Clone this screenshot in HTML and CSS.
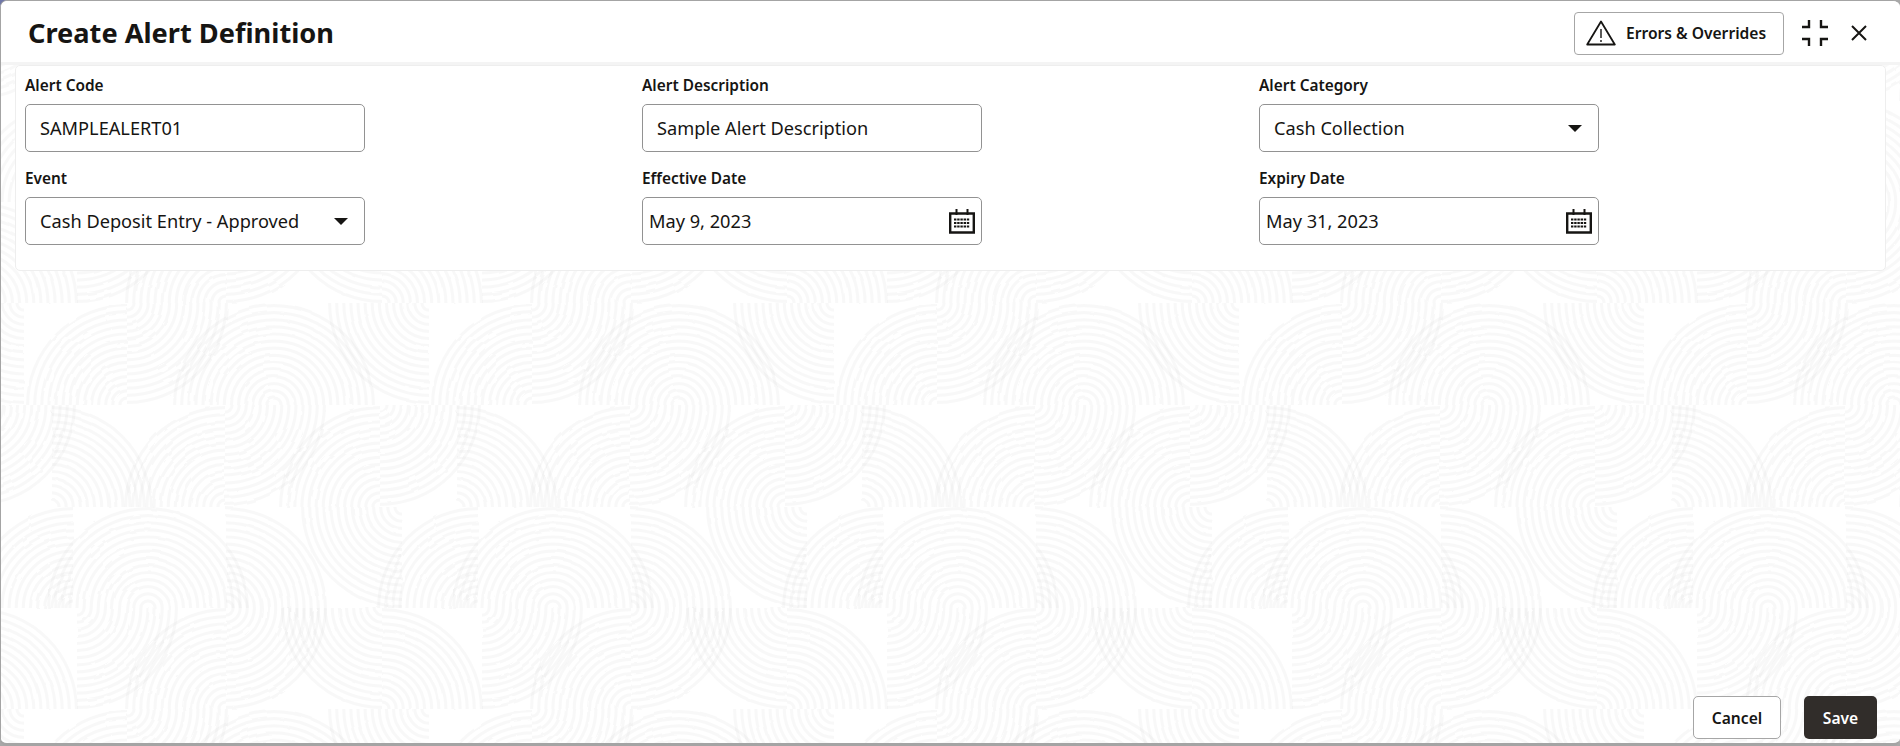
FILE: index.html
```html
<!DOCTYPE html>
<html lang="en">
<head>
<meta charset="utf-8">
<title>Create Alert Definition</title>
<link rel="stylesheet" href="styles.css">
</head>
<body>
<div class="dialog">
  <svg class="pattern" width="1900" height="746" aria-hidden="true">
    <defs>
      <filter id="wobble" x="0" y="0" width="100%" height="100%">
        <feTurbulence type="fractalNoise" baseFrequency="0.05" numOctaves="2" seed="4"/>
        <feDisplacementMap in="SourceGraphic" scale="3"/>
      </filter>
      <path id="q" class="rings" d="M-7.1 0A7.1 7.1 0 0 1 0-7.1M-14.200 0A14.200 14.200 0 0 1 0-14.200M-21.300 0A21.300 21.300 0 0 1 0-21.300M-28.400 0A28.400 28.400 0 0 1 0-28.400M-35.500 0A35.500 35.500 0 0 1 0-35.500M-42.600 0A42.600 42.600 0 0 1 0-42.600M-49.700 0A49.700 49.700 0 0 1 0-49.700M-56.800 0A56.800 56.800 0 0 1 0-56.800M-63.900 0A63.900 63.900 0 0 1 0-63.900M-71 0A71 71 0 0 1 0-71M-78.100 0A78.100 78.100 0 0 1 0-78.100M-85.200 0A85.200 85.200 0 0 1 0-85.200M-92.300 0A92.300 92.300 0 0 1 0-92.300M-99.400 0A99.400 99.400 0 0 1 0-99.400"/>
      <pattern id="tile" width="405" height="406" patternUnits="userSpaceOnUse" patternTransform="translate(0 -1)">
        <g filter="url(#wobble)">
          <use href="#q" transform="translate(52 102) scale(-1 1)"/>
          <use href="#q" transform="translate(225 102)"/>
          <use href="#q" transform="translate(225 0) scale(-1 -1)"/>
          <use href="#q" transform="translate(380 102)"/>
          <use href="#q" transform="translate(380 0) scale(-1 -1)"/>
          <use href="#q" transform="translate(-25 0) scale(-1 -1)"/>
          <use href="#q" transform="translate(148 203)"/>
          <use href="#q" transform="translate(148 203) scale(-1 1)"/>
          <use href="#q" transform="translate(226 203) scale(-1 1)"/>
          <use href="#q" transform="translate(402 102) scale(1 -1)"/>
          <use href="#q" transform="translate(73 203)"/>
          <use href="#q" transform="translate(478 203)"/>
          <use href="#q" transform="translate(77 203) scale(-1 -1)"/>
          <use href="#q" transform="translate(226 304)"/>
          <use href="#q" transform="translate(226 203) scale(-1 -1)"/>
          <use href="#q" transform="translate(382 203) scale(1 -1)"/>
          <use href="#q" transform="translate(382 304) scale(-1 1)"/>
          <use href="#q" transform="translate(-23 304) scale(-1 1)"/>
          <use href="#q" transform="translate(127 406)"/>
          <use href="#q" transform="translate(127 304) scale(-1 -1)"/>
          <use href="#q" transform="translate(274 406)"/>
          <use href="#q" transform="translate(274 406) scale(-1 1)"/>
          <use href="#q" transform="translate(429 304) scale(1 -1)"/>
          <use href="#q" transform="translate(24 304) scale(1 -1)"/>
        </g>
      </pattern>
    </defs>
    <rect width="1900" height="746" fill="url(#tile)"/>
  </svg>

  <header class="head">
    <h1 class="title">Create Alert Definition</h1>
    <div class="head-actions">
      <button class="btn-errors" type="button">
        <svg class="icon-warn" width="30" height="26" viewBox="0 0 30 26" aria-hidden="true">
          <path d="M15 1.500 L28.800 24.500 H1.200 Z" fill="none" stroke="#161513" stroke-width="1.8" stroke-linejoin="round"/>
          <path d="M15 9 V18 M15 20 V22" fill="none" stroke="#161513" stroke-width="1.4"/>
        </svg>
        Errors &amp; Overrides
      </button>
      <svg class="icon-min" width="26" height="26" viewBox="0 0 26 26" aria-hidden="true">
        <path d="M7 0V7H0M19 0V7H26M7 26V19H0M19 26V19H26" fill="none" stroke="#161513" stroke-width="2.4"/>
      </svg>
      <svg class="icon-close" width="16" height="16" viewBox="0 0 16 16" aria-hidden="true">
        <path d="M1 1L15 15M15 1L1 15" fill="none" stroke="#161513" stroke-width="2"/>
      </svg>
    </div>
  </header>

  <section class="card">
    <div class="field">
      <label class="label">Alert Code</label>
      <div class="control"><span class="value">SAMPLEALERT01</span></div>
    </div>
    <div class="field">
      <label class="label">Alert Description</label>
      <div class="control"><span class="value">Sample Alert Description</span></div>
    </div>
    <div class="field">
      <label class="label">Alert Category</label>
      <div class="control"><span class="value">Cash Collection</span><span class="caret"></span></div>
    </div>
    <div class="field">
      <label class="label">Event</label>
      <div class="control"><span class="value">Cash Deposit Entry - Approved</span><span class="caret"></span></div>
    </div>
    <div class="field">
      <label class="label">Effective Date</label>
      <div class="control control-date"><span class="value">May 9, 2023</span>
        <svg class="icon-cal" width="26" height="26" viewBox="0 0 26 26" aria-hidden="true">
          <path d="M1.2 5.5H24.8V24.5H1.2Z" fill="none" stroke="#161513" stroke-width="2.4"/>
          <path d="M7.500 1V7M18.500 1V7" fill="none" stroke="#161513" stroke-width="2"/>
          <path d="M5 11.5H21M5 15H21M5 18.500H21" fill="none" stroke="#161513" stroke-width="2.200" stroke-dasharray="2.400 .8"/>
        </svg>
      </div>
    </div>
    <div class="field">
      <label class="label">Expiry Date</label>
      <div class="control control-date"><span class="value">May 31, 2023</span>
        <svg class="icon-cal" width="26" height="26" viewBox="0 0 26 26" aria-hidden="true">
          <path d="M1.2 5.5H24.8V24.5H1.2Z" fill="none" stroke="#161513" stroke-width="2.4"/>
          <path d="M7.500 1V7M18.500 1V7" fill="none" stroke="#161513" stroke-width="2"/>
          <path d="M5 11.5H21M5 15H21M5 18.500H21" fill="none" stroke="#161513" stroke-width="2.200" stroke-dasharray="2.400 .8"/>
        </svg>
      </div>
    </div>
  </section>

  <footer class="foot">
    <button class="btn btn-cancel" type="button">Cancel</button>
    <button class="btn btn-save" type="button">Save</button>
  </footer>
</div>
</body>
</html>
```
FILE: styles.css
```css
* { box-sizing: border-box; }

html, body {
  margin: 0;
  height: 746px;
  overflow: hidden;
}

body {
  background: linear-gradient(135deg, #6f77a8 8px, #a8a8a8 8px);
  font-family: "Noto Sans", "Open Sans", sans-serif;
  color: #161513;
}

.dialog {
  position: relative;
  height: 746px;
  display: flex;
  flex-direction: column;
  background: #fff;
  border: 1px solid #a4a4a4;
  border-bottom-width: 3px;
  border-right-width: 0;
  border-radius: 7px;
  overflow: hidden;
}

.pattern {
  position: absolute;
  top: -1px;
  left: -1px;
  pointer-events: none;
}

.rings {
  fill: none;
  stroke: #000;
  stroke-opacity: 0.026;
  stroke-width: 3.2;
}

.head {
  position: relative;
  flex: none;
  height: 64px;
  padding: 0 33px 0 27px;
  display: flex;
  align-items: center;
  justify-content: space-between;
  background: #fff;
  border-bottom: 3px solid #f4f4f4;
}

.title {
  margin: 3px 0 0;
  font-size: 27.2px;
  font-weight: 700;
  line-height: 36px;
}

.head-actions {
  display: flex;
  align-items: center;
  margin-top: 3px;
}

.btn-errors {
  width: 210px;
  height: 43px;
  padding: 0 0 0 11px;
  display: flex;
  align-items: center;
  gap: 10px;
  background: #fff;
  border: 1px solid #a6a6a6;
  border-radius: 4px;
  font: 600 15.6px "Noto Sans", sans-serif;
  color: #161513;
}

.icon-min { margin-left: 18px; }
.icon-close { margin-left: 23px; }

.card {
  position: relative;
  flex: none;
  margin: 0 14px;
  height: 206px;
  padding: 8px 0 0 9px;
  display: grid;
  grid-template-columns: repeat(3, 617px);
  grid-auto-rows: 93px;
  background: #fff;
  border: 1px solid #eeeeee;
  border-radius: 5px;
}

.field {
  display: flex;
  flex-direction: column;
  align-items: flex-start;
}

.label {
  padding-top: 1px;
  font-size: 15.4px;
  font-weight: 600;
  line-height: 22px;
  height: 30px;
}

.control {
  width: 340px;
  height: 48px;
  padding: 0 14px;
  display: flex;
  align-items: center;
  justify-content: space-between;
  background: #fff;
  border: 1px solid #929292;
  border-radius: 5px;
}

.control-date {
  padding: 0 6px;
}

.value {
  font-size: 18.2px;
  line-height: 24px;
}

.caret {
  width: 0;
  height: 0;
  margin-right: 2px;
  border-left: 7px solid transparent;
  border-right: 7px solid transparent;
  border-top: 7px solid #161513;
}

.foot {
  position: relative;
  margin-top: auto;
  padding: 0 23px 4px 0;
  display: flex;
  justify-content: flex-end;
  gap: 23px;
}

.btn {
  height: 43px;
  border-radius: 5px;
  font: 600 15.6px "Noto Sans", sans-serif;
}

.btn-cancel {
  width: 88px;
  background: #fff;
  border: 1px solid #a6a6a6;
  color: #161513;
}

.btn-save {
  width: 73px;
  background: #312d2a;
  border: 0;
  color: #fff;
}
```
